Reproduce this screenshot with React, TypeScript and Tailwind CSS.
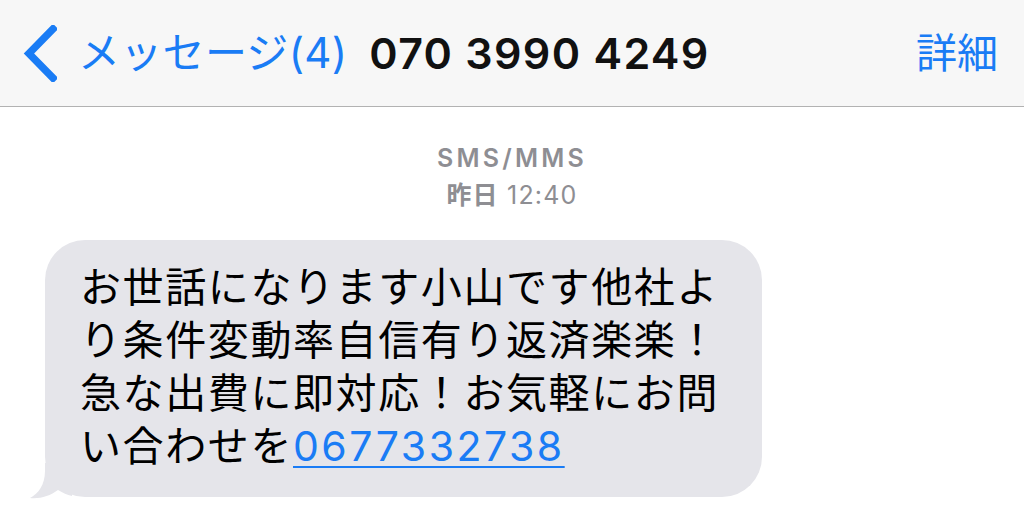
import React from 'react';

const FONT = "Inter, 'Noto Sans CJK JP', sans-serif";

const App = () => {
  return (
    <main className="w-[1024px] h-[514px] bg-white overflow-hidden" style={{ fontFamily: FONT }}>
      {/* Nav bar */}
      <header className="h-[107px] bg-[#f7f7f7] border-b border-[#b2b2b2] flex items-center pl-[23px] pr-[26px]">
        <svg width="34" height="57" viewBox="0 0 34 57" className="shrink-0">
          <polyline
            points="30,4 6,28.5 30,53"
            fill="none"
            stroke="#1a7cf5"
            strokeWidth="7.5"
            strokeLinecap="square"
          />
        </svg>
        <span className="ml-[21px] text-[42px] leading-none text-[#1a7cf5] tracking-[0.3px]">メッセージ(4)</span>
        <span className="ml-[22px] text-[43px] leading-none font-semibold text-[#111] tracking-[1.3px]">070 3990 4249</span>
        <div className="flex-1" />
        <span className="text-[41px] leading-none text-[#1a7cf5]">詳細</span>
      </header>

      {/* Timestamp */}
      <div className="mt-[33px] flex flex-col items-center text-[#8e8e93] text-[25px] leading-[37px]">
        <span className="font-semibold tracking-[3.2px]">SMS/MMS</span>
        <span className="tracking-[1.2px]">
          <span className="font-semibold">昨日</span> 12:40
        </span>
      </div>

      {/* Bubble */}
      <div className="relative ml-[45px] mt-[26px] w-[717px] bg-[#e5e5ea] rounded-[40px] pl-[35px] pr-[20px] pt-[21px] pb-[24px]">
        <svg
          width="45"
          height="36"
          viewBox="0 0 45 36"
          className="absolute left-[-18px] bottom-[-2px]"
        >
          <path
            d="M18 0 L18 8 C18 22 11 31 3 35 C13 36 23 33 31 27 C36 30 40 32 45 33 L45 0 Z"
            fill="#e5e5ea"
          />
        </svg>
        <p className="relative text-[41px] leading-[53px] text-black tracking-[1.6px]">
          お世話になります小山です他社よ
          <br />
          り条件変動率自信有り返済楽楽！
          <br />
          急な出費に即対応！お気軽にお問
          <br />
          い合わせを
          <span className="text-[#1a7cf5] underline decoration-2 underline-offset-[5px] tracking-[2.5px]">0677332738</span>
        </p>
      </div>
    </main>
  );
};

export default App;
